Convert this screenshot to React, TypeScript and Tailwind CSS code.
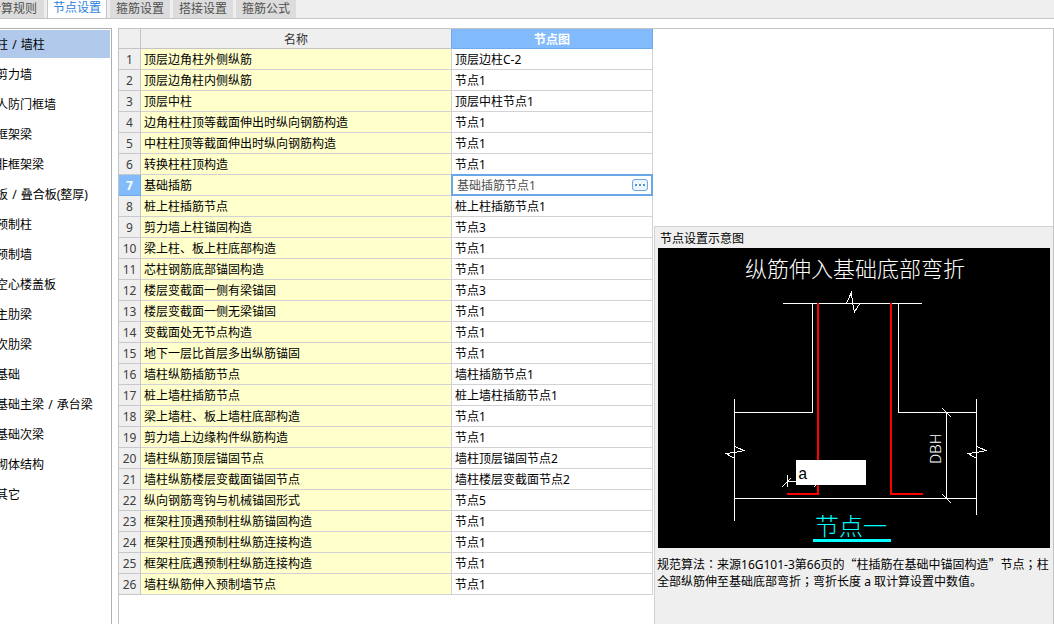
import { useState } from "react";

const tabs = ["计算规则", "节点设置", "箍筋设置", "搭接设置", "箍筋公式"];

const components = [
  "柱 / 墙柱", "剪力墙", "人防门框墙", "框架梁", "非框架梁", "板 / 叠合板(整厚)", "预制柱", "预制墙",
  "空心楼盖板", "主肋梁", "次肋梁", "基础", "基础主梁 / 承台梁", "基础次梁", "砌体结构", "其它",
];

const rows: [string, string][] = [
  ["顶层边角柱外侧纵筋", "顶层边柱C-2"],
  ["顶层边角柱内侧纵筋", "节点1"],
  ["顶层中柱", "顶层中柱节点1"],
  ["边角柱柱顶等截面伸出时纵向钢筋构造", "节点1"],
  ["中柱柱顶等截面伸出时纵向钢筋构造", "节点1"],
  ["转换柱柱顶构造", "节点1"],
  ["基础插筋", "基础插筋节点1"],
  ["桩上柱插筋节点", "桩上柱插筋节点1"],
  ["剪力墙上柱锚固构造", "节点3"],
  ["梁上柱、板上柱底部构造", "节点1"],
  ["芯柱钢筋底部锚固构造", "节点1"],
  ["楼层变截面一侧有梁锚固", "节点3"],
  ["楼层变截面一侧无梁锚固", "节点1"],
  ["变截面处无节点构造", "节点1"],
  ["地下一层比首层多出纵筋锚固", "节点1"],
  ["墙柱纵筋插筋节点", "墙柱插筋节点1"],
  ["桩上墙柱插筋节点", "桩上墙柱插筋节点1"],
  ["梁上墙柱、板上墙柱底部构造", "节点1"],
  ["剪力墙上边缘构件纵筋构造", "节点1"],
  ["墙柱纵筋顶层锚固节点", "墙柱顶层锚固节点2"],
  ["墙柱纵筋楼层变截面锚固节点", "墙柱楼层变截面节点2"],
  ["纵向钢筋弯钩与机械锚固形式", "节点5"],
  ["框架柱顶遇预制柱纵筋锚固构造", "节点1"],
  ["框架柱顶遇预制柱纵筋连接构造", "节点1"],
  ["框架柱底遇预制柱纵筋连接构造", "节点1"],
  ["墙柱纵筋伸入预制墙节点", "节点1"],
];

const ACTIVE_ROW = 6;

function TabBar() {
  return (
    <nav className="flex h-[19px] shrink-0 gap-[3px] overflow-hidden border-b border-[#c3c3c8] bg-[#efefef]">
      {tabs.map((tab, i) => (
        <button
          key={tab}
          type="button"
          className={
            i === 1
              ? "-mb-px h-[19px] w-[60px] shrink-0 border-x border-[#c3c3c8] bg-white pb-1 leading-4 text-[#2a7fe0]"
              : i === 0
                ? "-ml-[18px] h-[18px] w-[62px] shrink-0 bg-[#dcdcdc] leading-4 text-[#505050]"
                : "h-[18px] w-[60px] shrink-0 bg-[#dcdcdc] leading-4 text-[#505050]"
          }
        >
          {tab}
        </button>
      ))}
    </nav>
  );
}

function ComponentName({ name }: { name: string }) {
  const [first, second] = name.split("/");
  if (!second) return <>{name}</>;
  return (
    <>
      {first}
      <span className="px-px">/</span>
      {second}
    </>
  );
}

function Sidebar() {
  return (
    <aside className="w-28 shrink-0 overflow-hidden border-t border-r border-[#b0b0b0] bg-white">
      <ul>
        {components.map((name, i) => (
          <li key={name} className="flex h-[30px] items-center pr-px">
            <button
              type="button"
              className={
                i === 0
                  ? "-ml-1 h-7 grow bg-[#b1caec] pt-0.5 text-left whitespace-nowrap"
                  : "-ml-1 h-7 grow pt-0.5 text-left whitespace-nowrap"
              }
            >
              <ComponentName name={name} />
            </button>
          </li>
        ))}
      </ul>
    </aside>
  );
}

function NodeEditor({ label }: { label: string }) {
  const [value, setValue] = useState(label);
  return (
    <div className="relative flex h-5 items-center bg-white pr-1 pl-1 outline-2 -outline-offset-1 outline-[#68a8e8]">
      <input
        aria-label="节点图"
        value={value}
        onChange={(e) => setValue(e.target.value)}
        className="w-0 min-w-0 grow bg-transparent pt-0.5 pl-px text-[#505050] outline-none"
      />
      <button
        type="button"
        aria-label="选择节点"
        className="flex h-3 w-4 items-center justify-center gap-0.5 rounded-[3px] border border-[#68a8e8] bg-[#eef5fd]"
      >
        <span className="size-0.5 bg-[#5b95cc]" />
        <span className="size-0.5 bg-[#5b95cc]" />
        <span className="size-0.5 bg-[#5b95cc]" />
      </button>
    </div>
  );
}

function NodeTable() {
  return (
    <table className="w-[534px] table-fixed border-separate border-spacing-0 leading-4">
      <colgroup>
        <col className="w-[22px]" />
        <col className="w-[311px]" />
        <col className="w-[201px]" />
      </colgroup>
      <thead>
        <tr className="h-5">
          <th className="border-r border-b border-[#c3c3c8] bg-[#efefef] p-0" />
          <th className="border-r border-b border-r-[#6faaea] border-b-[#c3c3c8] bg-[#efefef] p-0 pt-0.5 font-normal text-[#333]">名称</th>
          <th className="border-r border-b border-[#6faaea] bg-[#82bbfb] p-0 pt-0.5 font-bold text-white">节点图</th>
        </tr>
      </thead>
      <tbody>
        {rows.map(([name, node], i) => (
          <tr key={name} className="h-[21px]">
            <th
              scope="row"
              className={
                i === ACTIVE_ROW
                  ? "border-r border-b border-[#6faaea] bg-[#82bbfb] p-0 pt-0.5 font-bold text-white"
                  : "border-r border-b border-[#c8c8cc] bg-[#efefef] p-0 pt-0.5 font-normal text-[#404040]"
              }
            >
              {i + 1}
            </th>
            <td className="border-r border-b border-[#d2d2d6] bg-[#ffffcc] p-0 pt-0.5 pl-[3px] whitespace-nowrap">{name}</td>
            <td
              className={
                i === ACTIVE_ROW
                  ? "border-r border-b border-[#d2d2d6] p-0"
                  : "border-r border-b border-[#d2d2d6] p-0 pt-0.5 pl-[3px] whitespace-nowrap"
              }
            >
              {i === ACTIVE_ROW ? <NodeEditor label={node} /> : node}
            </td>
          </tr>
        ))}
      </tbody>
    </table>
  );
}

function Diagram() {
  return (
    <div className="flex justify-center bg-black">
      <div className="relative h-[300px] w-[392px] shrink-0">
        <svg viewBox="0 0 392 300" className="block h-[300px] w-[392px]" fill="none">
          <g stroke="#fff" strokeWidth="1" shapeRendering="crispEdges">
            <path d="M125 55.5H264M154.5 55V164.5H76M240.5 55V164.5H318M76.5 151V273M318.5 151V267M76 250.5H318M288.5 164V251" />
            <path d="M284 160L293 169M284 246L293 255" />
            <path d="M188.5 55L193.5 44.5L194.5 55L196.5 64L201.5 56" />
            <path d="M76.5 198.5L86 202.5L77 204.5L68 205.5L76.5 210.5" />
            <path d="M318.5 198.5L328 202.5L319 204.5L310 205.5L318.5 210.5" />
            <path d="M129.5 227V239M124 239L133 230M130 233.5H160M156 239L162 233" />
          </g>
          <path d="M160 55V246H129M233 55V246H265" stroke="#f00" strokeWidth="2" shapeRendering="crispEdges" />
          <path d="M155 292.5H233" stroke="#0ff" strokeWidth="3" shapeRendering="crispEdges" />
          <text x="87" y="29" fill="#fff" className="font-['Noto_Sans_CJK_SC',sans-serif] text-[22px] font-light">
            纵筋伸入基础底部弯折
          </text>
          <text x="157" y="287" fill="#0ff" className="font-['Noto_Sans_CJK_SC',sans-serif] text-2xl font-light">
            节点一
          </text>
          <text transform="translate(283 216) rotate(-90)" fill="#fff" className="font-['Noto_Sans_CJK_SC',sans-serif] text-[15px] font-light">
            DBH
          </text>
        </svg>
        <input
          aria-label="弯折长度 a"
          defaultValue="a"
          className="absolute top-[212px] left-[138px] h-[25px] w-[70px] bg-white pt-1 pl-0.5 font-['Liberation_Mono',monospace] text-base leading-5 text-black outline-none"
        />
      </div>
    </div>
  );
}

function CenteredMark({ children }: { children: string }) {
  return (
    <span lang="zh-TW" className="font-['Noto_Sans_CJK_TC',sans-serif] leading-none">
      {children}
    </span>
  );
}

function WideQuote({ children }: { children: string }) {
  return <span className="font-['Noto_Sans_CJK_SC',sans-serif] leading-none">{children}</span>;
}

function PreviewPanel() {
  return (
    <section className="mt-[197px] min-w-0 grow border-t border-l border-[#d2d2d6] bg-[#efefef] pr-[3px] pl-[3px]">
      <h2 className="h-[21px] pt-1 pl-0.5 leading-4">节点设置示意图</h2>
      <Diagram />
      <p className="-mr-1 -ml-px pt-2 leading-[17px]">
        规范算法<CenteredMark>：</CenteredMark>来源16G101-3第66页的<WideQuote>“</WideQuote>
        柱插筋在基础中锚固构造<WideQuote>”</WideQuote>节点<CenteredMark>；</CenteredMark>
        柱全部纵筋伸至基础底部弯折<CenteredMark>；</CenteredMark>弯折长度 a 取计算设置中数值。
      </p>
    </section>
  );
}

export default function App() {
  return (
    <div lang="zh-CN" className="flex h-screen flex-col overflow-hidden bg-white font-['Noto_Sans','Noto_Sans_CJK_SC',sans-serif] text-xs text-black">
      <TabBar />
      <div className="flex min-h-0 grow gap-1.5 pt-[9px]">
        <Sidebar />
        <main className="flex min-w-0 grow gap-px border-t border-r border-l border-[#c3c3c8] bg-white">
          <div className="shrink-0">
            <NodeTable />
          </div>
          <PreviewPanel />
        </main>
      </div>
    </div>
  );
}
